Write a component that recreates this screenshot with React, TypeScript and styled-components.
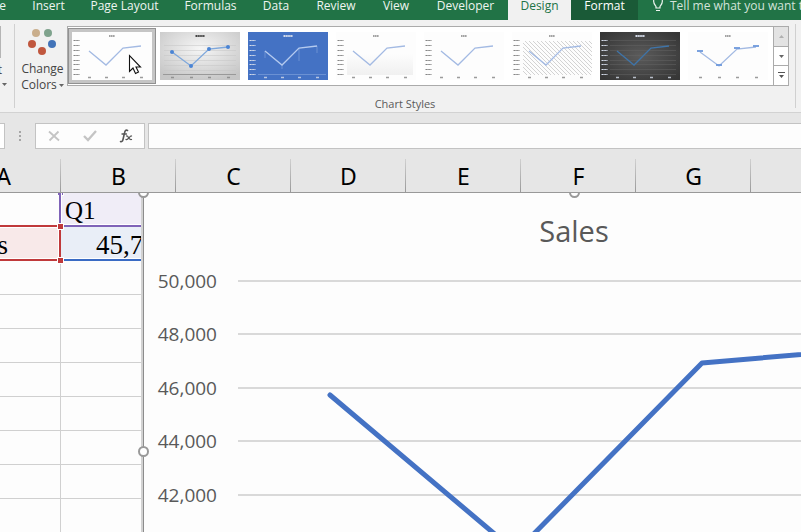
import React from "react";
import styled, { createGlobalStyle, css } from "styled-components";

const GlobalStyle = createGlobalStyle`
  * { box-sizing: border-box; }
  html, body { margin: 0; height: 100%; overflow: hidden; background: #fdfdfd; }
  button { font: inherit; color: inherit; border: 0; padding: 0; margin: 0; background: none; }
`;

const Page = styled.div`
  min-height: 100vh;
  overflow: hidden;
  background: #e6e6e6;
  font-family: "Open Sans", "Noto Sans", sans-serif;
  font-size: 12px;
  color: #444;
`;

/* ---------- ribbon tabs ---------- */

const TabBar = styled.nav`
  display: flex;
  height: 20px;
  overflow: hidden;
  background: #217346;
`;

const Tab = styled.button<{ $w: number; $tone?: "active" | "context" }>`
  display: flex;
  flex: none;
  justify-content: center;
  width: ${(p) => p.$w}px;
  height: 20px;
  line-height: 12px;
  white-space: nowrap;
  color: #eef5f0;
  ${(p) => p.$tone === "active" && css`background: #f1f1f1; color: #217346;`}
  ${(p) => p.$tone === "context" && css`background: #1a5a37; color: #fff;`}
`;

const HomeTab = styled(Tab)`
  justify-content: flex-end;
  padding-right: 14px;
`;

const TellMe = styled.button`
  display: flex;
  flex: none;
  gap: 6px;
  height: 20px;
  padding-left: 14px;
  line-height: 12px;
  white-space: nowrap;
  color: #d3e3da;
`;

/* ---------- ribbon ---------- */

const Ribbon = styled.div`
  display: flex;
  height: 93px;
  padding-top: 4px;
  background: #f1f1f1;
  border-bottom: 1px solid #d2d2d2;
`;

const Divider = styled.div`
  flex: none;
  width: 1px;
  height: 84px;
  background: #d0d0d0;
`;

const PrevGroup = styled.div`
  flex: none;
  display: flex;
  flex-direction: column;
  align-items: flex-start;
  width: 14px;
  padding-top: 2px;
  overflow: hidden;
`;

const PrevIcon = styled.span`
  width: 1px;
  height: 32px;
  background: #b5b5b5;
`;

const PrevButton = styled.button`
  display: flex;
  flex-direction: column;
  align-items: flex-start;
  line-height: 16px;
`;

const PrevLabel = styled.span`
  display: flex;
  justify-content: flex-end;
  width: 2px;
  height: 16px;
  margin-top: 4px;
`;

const PrevArrow = styled.span`
  display: flex;
  padding: 5px 0 0 2px;
`;

const Group = styled.section`
  flex: none;
  display: flex;
  flex-direction: column;
  width: 780px;
`;

const GroupBody = styled.div`
  display: flex;
  align-items: flex-start;
  padding-top: 2px;
  height: 72px;
`;

const ChangeColors = styled.button`
  display: flex;
  flex-direction: column;
  align-items: center;
  width: 52px;
  padding-top: 2px;
  padding-left: 3px;
  line-height: 16px;

  > svg { margin-bottom: 3px; }
`;

const ButtonLine = styled.span`
  display: flex;
  align-items: center;
  gap: 2px;
  white-space: nowrap;
`;

const GroupLabel = styled.div`
  text-align: center;
  line-height: 16px;
  font-size: 11px;
  color: #5a5a5a;
`;

const Gallery = styled.div`
  display: flex;
  height: 60px;
  border: 1px solid #ababab;
  background: #fff;
`;

const Styles = styled.div`
  display: flex;
  align-items: center;
  width: 705px;
`;

const Thumb = styled.button<{ $selected?: boolean }>`
  display: flex;
  flex: none;
  width: 88px;
  height: 56px;
  padding: 4px;
  ${(p) => p.$selected && css`
    padding: 3px;
    background: #c5c5c5;
    border: 1px solid #919191;
  `}
`;

const Scroller = styled.div`
  display: flex;
  flex-direction: column;
  width: 15px;
  border-left: 1px solid #ababab;
`;

const ScrollButton = styled.button<{ $off?: boolean }>`
  display: flex;
  flex: 1;
  align-items: center;
  justify-content: center;
  background: ${(p) => (p.$off ? "#e3e3e3" : "#fff")};
  & + & { border-top: 1px solid #ababab; }
`;

/* ---------- formula bar ---------- */

const FormulaBar = styled.div`
  display: flex;
  height: 37px;
  padding-top: 10px;
`;

const NameBox = styled.input`
  flex: none;
  width: 5px;
  height: 26px;
  padding: 0;
  border: 1px solid #c3c3c3;
  border-left: 0;
  background: #fff;
`;

const Grip = styled.div`
  display: flex;
  flex: none;
  justify-content: center;
  align-items: center;
  width: 30px;
  height: 26px;
`;

const FormulaButtons = styled.div`
  display: flex;
  flex: none;
  width: 110px;
  height: 26px;
  border: 1px solid #c3c3c3;
  background: #fdfdfd;
`;

const FormulaButton = styled.button`
  display: flex;
  flex: 1;
  align-items: center;
  justify-content: center;
`;

const FormulaInput = styled.input`
  flex: 1;
  min-width: 0;
  height: 26px;
  margin-left: 3px;
  border: 1px solid #c3c3c3;
  border-right: 0;
  background: #fdfdfd;
`;

/* ---------- sheet ---------- */

const Sheet = styled.main`
  position: relative;
  overflow: hidden;
`;

const Grid = styled.table`
  table-layout: fixed;
  width: 920px;
  margin-left: -54px;
  border-collapse: separate;
  border-spacing: 0;
  background: #fdfdfd;
`;

const ColumnHead = styled.th`
  position: relative;
  z-index: 2;
  height: 43px;
  padding: 10px 0 0;
  border-bottom: 1px solid #999;
  background: linear-gradient(#d0d0d0, #999) right bottom / 1px 33px no-repeat #e6e6e6;
  font: 400 23px/32px "Noto Sans", sans-serif;
  color: #000;
  vertical-align: top;
`;

const Cell = styled.td<{ $fill?: string }>`
  position: relative;
  height: 34px;
  padding: 0 0 0 4px;
  border-right: 1px solid #d0d0d0;
  border-bottom: 1px solid #d0d0d0;
  background: ${(p) => p.$fill ?? "transparent"};
  font: 25px/33px "Liberation Serif", serif;
  color: #000;
`;

const HeadingCell = styled(Cell)`
  padding-top: 2px;
  line-height: 31px;
`;

const NameCell = styled(Cell)`
  padding: 4px 52px 0 0;
  text-align: right;
  font-size: 27px;
  line-height: 29px;
`;

const ValueCell = styled(Cell)`
  padding: 4px 0 0 35px;
  font-size: 27px;
  line-height: 29px;
`;

const Range = styled.span<{ $color: string; $sides: string; $front?: boolean }>`
  position: absolute;
  z-index: ${(p) => (p.$front ? 1 : 0)};
  inset: -2px -1px -1px -2px;
  border: 0 solid ${(p) => p.$color};
  border-width: ${(p) => p.$sides};
  box-shadow: inset 0 0 0 1px #fff;
  pointer-events: none;
`;

const Corner = styled.i<{ $color: string; $at: "top" | "bottom" }>`
  position: absolute;
  z-index: 1;
  right: -4px;
  ${(p) => p.$at}: -4px;
  width: 7px;
  height: 7px;
  border: 1px solid #fff;
  background: ${(p) => p.$color};
`;

const ChartFrame = styled.figure`
  position: absolute;
  z-index: 2;
  top: 43px;
  right: 0;
  bottom: 0;
  left: 137px;
  margin: 0;
  overflow: hidden;
`;

const ChartSvg = styled.svg`
  display: block;
  font-family: "Open Sans", "Noto Sans", sans-serif;
  fill: #595959;
`;

const Pointer = styled.svg`
  position: absolute;
  z-index: 3;
  top: 54px;
  left: 128px;
  pointer-events: none;
`;

/* ---------- drawings ---------- */

const Down = ({ color = "#666" }: { color?: string }) => (
  <svg width="5" height="3" viewBox="0 0 5 3"><path d="M0 0h5L2.500 3z" fill={color} /></svg>
);

type ThumbKind = "plain" | "gray" | "blue" | "shade" | "simple" | "hatch" | "dark" | "labels";

const TICKS = [8, 13, 18, 23, 28, 32, 37, 42];
const SPREAD = [17, 34, 51, 69];

function ThumbArt({ kind }: { kind: ThumbKind }) {
  const inverse = kind === "blue" || kind === "dark";
  const wide = kind === "gray" || kind === "labels";
  const xs = wide ? [12, 31, 49, 68] : SPREAD;
  const ys = wide ? [20, 34, 17, 15] : [19, 33, 16, 14];
  const ink = inverse ? "#d5dcea" : "#858585";
  const bg = { gray: "url(#thumb-gray)", blue: "#4472c4", dark: "url(#thumb-dark)" }[kind as string] ?? "#fdfdfd";
  const stroke = { blue: "#b4caef", dark: "#3f74a8", gray: "#7fa8dc" }[kind as string] ?? "#a3bae3";
  return (
    <svg width="80" height="48" viewBox="0 0 80 48">
      <defs>
        <radialGradient id="thumb-gray" cx="50%" cy="35%" r="70%">
          <stop offset="0" stopColor="#f6f6f6" /><stop offset="1" stopColor="#c6c6c6" />
        </radialGradient>
        <radialGradient id="thumb-dark" cx="50%" cy="50%" r="65%">
          <stop offset="0" stopColor="#5b5b5b" /><stop offset="1" stopColor="#363636" />
        </radialGradient>
        <linearGradient id="thumb-shade" x1="0" y1="0" x2="0" y2="1">
          <stop offset="0" stopColor="#fdfdfd" /><stop offset="1" stopColor="#f0f0f0" />
        </linearGradient>
        <pattern id="thumb-hatch" width="4" height="4" patternUnits="userSpaceOnUse">
          <path d="M-1 -1l6 6M-1 3l2 2M3 -1l2 2" stroke="#c8c8c8" strokeWidth="0.800" />
        </pattern>
      </defs>
      <rect width="80" height="48" fill={bg} />
      {kind === "shade" && <rect x="11" y="22" width="66" height="21" fill="url(#thumb-shade)" />}
      {kind === "hatch" && <rect x="11" y="9" width="69" height="34" fill="url(#thumb-hatch)" />}
      {kind === "gray" && [13, 18, 23, 28, 33, 38].map((y) => <path key={y} d={`M4 ${y}.500H76`} stroke="#c4c4c4" strokeWidth="0.500" />)}
      {kind === "gray" && <path d="M3 42.500H76" stroke="#999" />}
      {kind === "dark" && TICKS.map((y) => <path key={y} d={`M10 ${y}.500H76`} stroke="#646464" strokeWidth="0.500" />)}
      {kind === "blue" && <path d="M10 42.500H78M17 19v7M34 33v4M51 16v13M69 14v7" stroke="#87a6de" strokeWidth="0.600" />}
      <path d={inverse || kind === "gray" ? "M35.500 4h9" : "M37 4h6"} stroke={kind === "gray" ? "#444" : ink} strokeWidth={kind === "gray" || inverse ? 2 : 1.500} strokeDasharray="1.500 0.400" />
      {!wide && TICKS.map((y) => <path key={y} d={`M1.500 ${y}.500h6`} stroke={ink} strokeWidth="1.200" strokeDasharray="1.500 0.300" />)}
      {xs.map((x) => <path key={x} d={`M${x - 1} 45.500h3`} stroke={ink} strokeWidth="1.500" opacity="0.800" />)}
      <path d={xs.map((x, i) => `${i ? "L" : "M"}${x} ${ys[i]}`).join("")} fill="none" stroke={stroke} strokeWidth="1.300" />
      {kind === "gray" && xs.map((x, i) => <circle key={x} cx={x} cy={ys[i]} r="2" fill="#4a84d4" />)}
      {kind === "labels" && xs.map((x, i) => <path key={x} d={`M${x - 3} ${ys[i] - 1}h6`} stroke="#6d98dc" strokeWidth="1.800" />)}
    </svg>
  );
}

const AXIS = [
  { label: "50,000", y: 88 },
  { label: "48,000", y: 141 },
  { label: "46,000", y: 195 },
  { label: "44,000", y: 248 },
  { label: "42,000", y: 302 },
];

function Chart() {
  return (
    <ChartFrame aria-label="Sales chart">
      <ChartSvg width="868" height="340" viewBox="0 0 868 340">
        <rect x="4" width="864" height="340" fill="#fdfdfd" />
        <rect x="4" width="2" height="340" fill="#d2d2d2" />
        <rect x="6" width="1" height="340" fill="#8c8c8c" />
        <text x="437" y="49" textAnchor="middle" fontSize="29">Sales</text>
        {AXIS.map(({ label, y }) => (
          <React.Fragment key={label}>
            <text x="80" y={y + 7} textAnchor="end" fontSize="19">{label}</text>
            <rect x="101" y={y - 1} width="745" height="2" fill="#d9d9d9" />
          </React.Fragment>
        ))}
        <polyline points="193,202 379,359 565,170 751,154" fill="none" stroke="#4472c4" strokeWidth="5" strokeLinecap="round" strokeLinejoin="round" />
        {[[6, -1], [437, -1], [6, 258]].map(([x, y]) => (
          <circle key={`${x}-${y}`} cx={x + 0.5} cy={y + 0.5} r="4.500" fill="#fff" stroke="#999" strokeWidth="2" />
        ))}
      </ChartSvg>
    </ChartFrame>
  );
}

const THUMBS: ThumbKind[] = ["plain", "gray", "blue", "shade", "simple", "hatch", "dark", "labels"];
const TABS: [string, number][] = [
  ["Insert", 57], ["Page Layout", 95], ["Formulas", 77], ["Data", 54], ["Review", 66], ["View", 54], ["Developer", 85],
];
const COLUMNS = ["A", "B", "C", "D", "E", "F", "G", ""];
const RED = "#c0393b";
const PURPLE = "#7f63b8";
const BLUE = "#3a6bc4";

export default function App() {
  return (
    <Page>
      <GlobalStyle />
      <TabBar aria-label="Ribbon tabs">
        <HomeTab $w={20}>Home</HomeTab>
        {TABS.map(([name, w]) => <Tab key={name} $w={w}>{name}</Tab>)}
        <Tab $w={63} $tone="active">Design</Tab>
        <Tab $w={67} $tone="context">Format</Tab>
        <TellMe>
          <svg width="12" height="12" viewBox="0 0 12 12" fill="none" stroke="#eef5f0" strokeWidth="1.200">
            <path d="M1.800 0C1 3 2.500 4.500 4 6.500V8h4V6.500C9.500 4.500 11 3 10.200 0M4 10.500h4" />
          </svg>
          <span>Tell me what you want to do</span>
        </TellMe>
      </TabBar>

      <Ribbon>
        <PrevGroup>
          <PrevButton aria-label="Quick Layout">
            <PrevIcon />
            <PrevLabel>t</PrevLabel>
            <PrevArrow><Down /></PrevArrow>
          </PrevButton>
        </PrevGroup>
        <Divider />
        <Group>
          <GroupBody>
            <ChangeColors>
              <svg width="30" height="30" viewBox="0 0 30 30">
                <circle cx="8" cy="5" r="4" fill="#c9ae8c" />
                <circle cx="20" cy="5" r="4" fill="#7fa38d" />
                <circle cx="4" cy="16" r="4" fill="#c0573e" />
                <circle cx="24" cy="16" r="4" fill="#4273b8" />
                <circle cx="14" cy="23" r="4" fill="#c0573e" />
              </svg>
              <ButtonLine>Change</ButtonLine>
              <ButtonLine>Colors <Down /></ButtonLine>
            </ChangeColors>
            <Gallery>
              <Styles>
                {THUMBS.map((kind, i) => (
                  <Thumb key={kind} $selected={i === 0} aria-label={`Style ${i + 1}`}><ThumbArt kind={kind} /></Thumb>
                ))}
              </Styles>
              <Scroller>
                <ScrollButton $off aria-label="Previous row">
                  <svg width="5" height="3" viewBox="0 0 5 3"><path d="M0 3h5L2.500 0z" fill="#b0b0b0" /></svg>
                </ScrollButton>
                <ScrollButton aria-label="Next row"><Down /></ScrollButton>
                <ScrollButton aria-label="More styles">
                  <svg width="7" height="7" viewBox="0 0 7 7" fill="#555"><path d="M0 0h7v1H0zM1 3h5L3.500 6z" /></svg>
                </ScrollButton>
              </Scroller>
            </Gallery>
          </GroupBody>
          <GroupLabel>Chart Styles</GroupLabel>
        </Group>
        <Divider />
      </Ribbon>

      <FormulaBar>
        <NameBox aria-label="Name box" />
        <Grip>
          <svg width="2" height="11" viewBox="0 0 2 11" fill="#a6a6a6"><path d="M0 0h2v2H0zM0 4h2v2H0zM0 8h2v2H0z" /></svg>
        </Grip>
        <FormulaButtons>
          <FormulaButton aria-label="Cancel">
            <svg width="12" height="12" viewBox="0 0 12 12" stroke="#c4c4c4" strokeWidth="1.800"><path d="M1 1.500l10 9M10.500 1.500l-9 9" /></svg>
          </FormulaButton>
          <FormulaButton aria-label="Enter">
            <svg width="14" height="12" viewBox="0 0 14 12" fill="none" stroke="#c4c4c4" strokeWidth="2.300"><path d="M1 6l4 4L13 1" /></svg>
          </FormulaButton>
          <FormulaButton aria-label="Insert function">
            <svg width="14" height="14" viewBox="0 0 14 14" fill="none" stroke="#555" strokeLinecap="round">
              <path d="M8.500 1.500C7 .5 6 1.500 5.500 4L4 10.500C3.500 12.500 2.500 13 1.500 12.500" strokeWidth="1.600" />
              <path d="M3 5h4.500M7.500 7C9.500 6 9.500 11.500 12.500 10.500M12.500 7C11 6.500 9 11.500 7 10.500" strokeWidth="1.300" />
            </svg>
          </FormulaButton>
        </FormulaButtons>
        <FormulaInput aria-label="Formula bar" />
      </FormulaBar>

      <Sheet>
        <Grid>
          <thead>
            <tr>{COLUMNS.map((c) => <ColumnHead key={c} scope="col">{c}</ColumnHead>)}</tr>
          </thead>
          <tbody>
            <tr>
              <Cell><Corner $color={PURPLE} $at="top" /></Cell>
              <HeadingCell $fill="#f0edf7">Q1<Range $color={PURPLE} $sides="0 0 2px 2px" $front /></HeadingCell>
              {COLUMNS.slice(2).map((c) => <Cell key={c} />)}
            </tr>
            <tr>
              <NameCell $fill="#f8e9e9">
                s
                <Range $color={RED} $sides="2px 2px 2px 0" $front />
                <Corner $color={RED} $at="top" />
                <Corner $color={RED} $at="bottom" />
              </NameCell>
              <ValueCell $fill="#e9eef7">45,7<Range $color={BLUE} $sides="0 0 2px 0" /></ValueCell>
              {COLUMNS.slice(2).map((c) => <Cell key={c} />)}
            </tr>
            {Array.from({ length: 8 }, (_, r) => (
              <tr key={r}>{COLUMNS.map((c) => <Cell key={c} />)}</tr>
            ))}
          </tbody>
        </Grid>
        <Chart />
      </Sheet>

      <Pointer width="14" height="21" viewBox="0 0 14 21">
        <path d="M1.500 1.500v16l3.500-3.500 2.500 5.500 3-1.500-2.500-5h4.500z" fill="#fff" stroke="#111" strokeWidth="1.100" />
      </Pointer>
    </Page>
  );
}
